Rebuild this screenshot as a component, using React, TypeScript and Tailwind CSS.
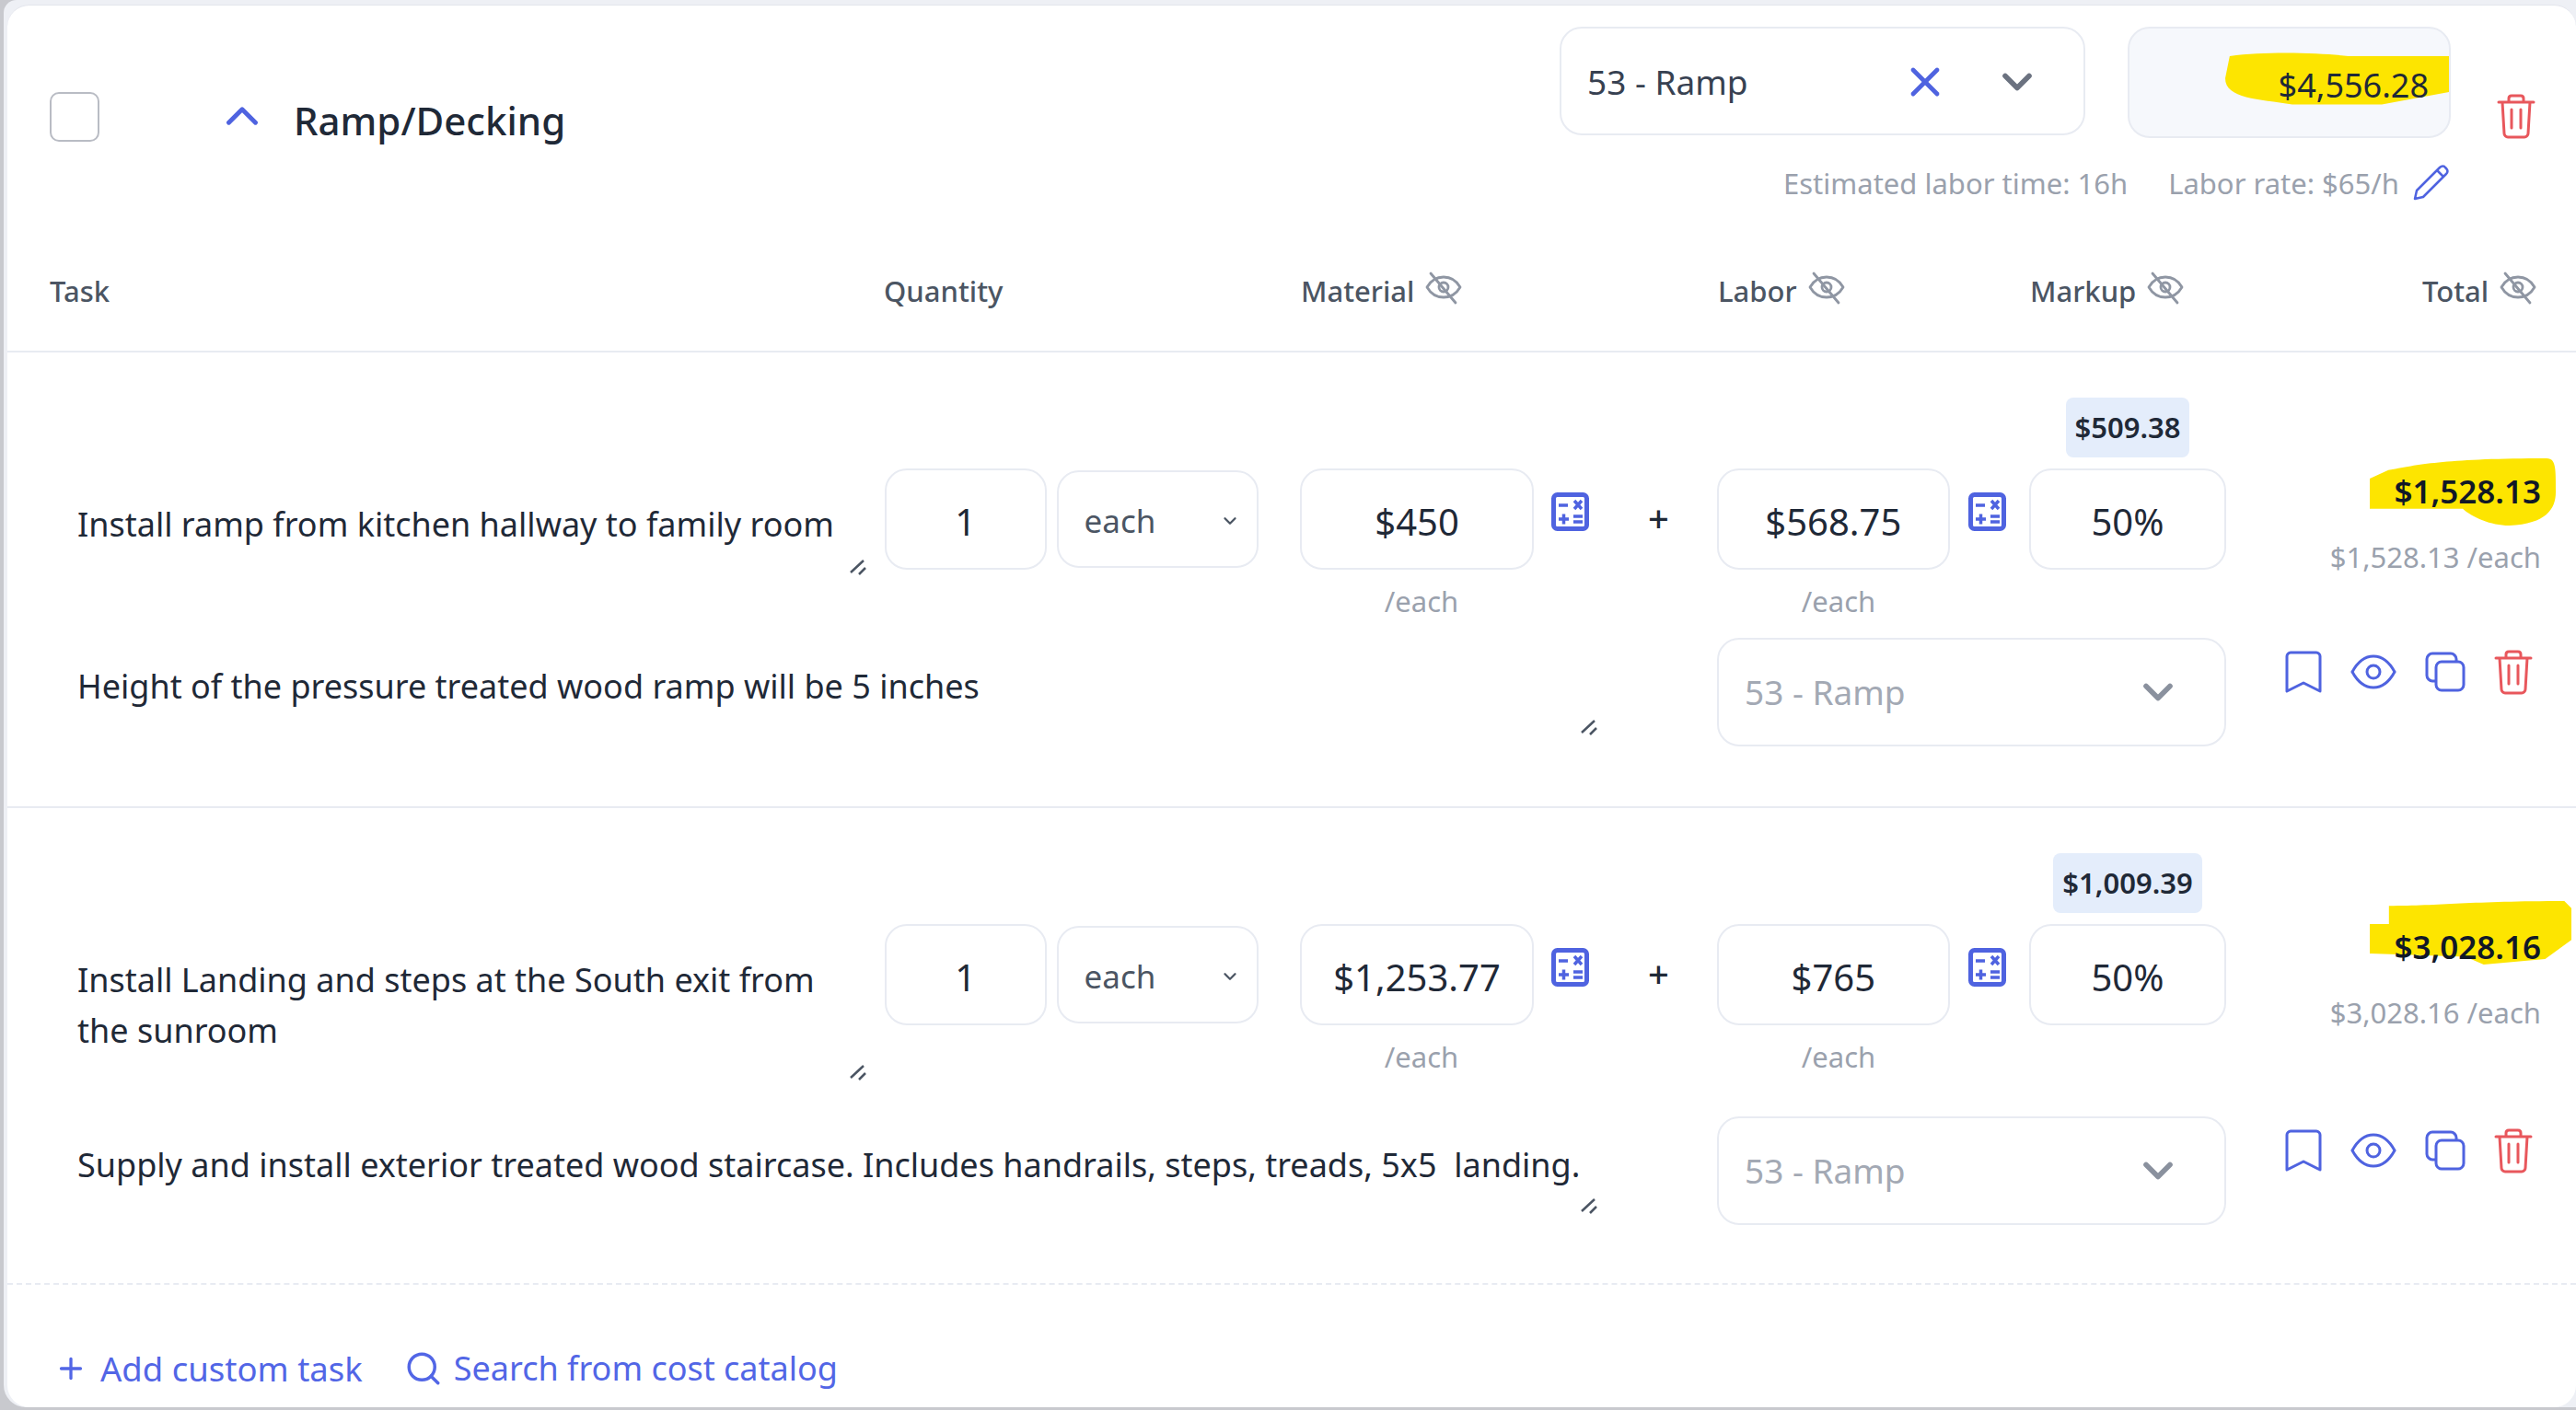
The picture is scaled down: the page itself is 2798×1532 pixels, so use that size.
import { Plus, Search, X, ChevronUp, ChevronDown } from "lucide-react";

const font = "font-['Noto_Sans','Open_Sans',sans-serif]";

const Calc = () => (
  <svg width="41" height="42" viewBox="0 0 41 42" fill="none" className="text-[#4f63e0]">
    <rect x="2.500" y="2.500" width="36" height="37" rx="4" stroke="currentColor" strokeWidth="5" />
    <path d="M8 14h10M25 9l8 9M33 9l-8 9M8 29h11M13.500 23.500v11M24 26h10M24 32h10" stroke="currentColor" strokeWidth="3.500" />
  </svg>
);

const EyeSlash = () => (
  <svg width="40" height="36" viewBox="0 0 40 36" fill="none" stroke="#8f96a3" strokeWidth="2.800" strokeLinecap="round" strokeLinejoin="round">
    <path d="M2 17c4-7 10-11 18-11s14 4 18 11c-4 7-10 11-18 11S6 24 2 17Z" />
    <circle cx="20" cy="17" r="5" />
    <path d="M6 2l27 32" />
  </svg>
);

const Pencil = () => (
  <svg width="40" height="40" viewBox="0 0 40 40" fill="none" stroke="#4f63e0" strokeWidth="2.500" strokeLinejoin="round">
    <path d="M3 37l2-9L30 3c2-2 5-2 6 0l1 1c2 2 2 4 0 6L12 35l-9 2Z" />
    <path d="M27 6l7 7" />
  </svg>
);

const Trash = () => (
  <svg width="42" height="50" viewBox="0 0 42 50" fill="none" stroke="#e8575c" strokeWidth="3" strokeLinecap="round" strokeLinejoin="round">
    <path d="M2 10h38M13 10V6c0-2 1-3 3-3h10c2 0 3 1 3 3v4M6 10l2 34c0 2 2 4 4 4h18c2 0 4-2 4-4l2-34M16 18v20M26 18v20" />
  </svg>
);

const Bookmark = () => (
  <svg width="40" height="46" viewBox="0 0 40 46" fill="none" stroke="#4f63e0" strokeWidth="3" strokeLinejoin="round">
    <path d="M2 44V6c0-2 2-4 4-4h28c2 0 4 2 4 4v38L20 35 2 44Z" />
  </svg>
);

const Eye = () => (
  <svg width="50" height="38" viewBox="0 0 50 38" fill="none" stroke="#4f63e0" strokeWidth="3">
    <path d="M2 19C8 8 15 2 25 2s17 6 23 17c-6 11-13 17-23 17S8 30 2 19Z" />
    <circle cx="25" cy="19" r="7" />
  </svg>
);

const Copy = () => (
  <svg width="44" height="44" viewBox="0 0 44 44" fill="none" stroke="#4f63e0" strokeWidth="3">
    <path d="M12 32H8c-3 0-6-3-6-6V8c0-3 3-6 6-6h20c3 0 6 3 6 6v3" />
    <rect x="12" y="11" width="30" height="31" rx="6" />
  </svg>
);

const Grip = () => (
  <svg width="20" height="20" viewBox="0 0 20 20" fill="none" stroke="#4b5563" strokeWidth="2.500">
    <path d="M2 16L16 3M11 18l7-7" />
  </svg>
);

// yellow marker strokes sit behind the totals
const Marker = ({ d, className }: { d: string; className: string }) => (
  <svg className={`absolute ${className}`} viewBox="0 0 200 80" preserveAspectRatio="none">
    <path d={d} fill="#fde500" />
  </svg>
);

const Box = ({ w, children }: { w: string; children: React.ReactNode }) => (
  <div className={`${w} h-[110px] pt-[5px] flex items-center justify-center rounded-[24px] border-2 border-[#e8ebf2] text-[40px] text-[#1f2937] bg-white`}>
    {children}
  </div>
);

const Row = ({
  h, title, note, material, labor, markup, total, noteTop, gripTop, border, markerClass, markerPath,
}: {
  h: string; title: React.ReactNode; note: string; material: string; labor: string; markup: string; total: string;
  noteTop: string; gripTop: string; border: string; markerClass: string; markerPath: string;
}) => (
  <div className={`${h} pl-[46px] pr-[38px] pt-[49px] flex flex-col border-b-2 ${border}`}>
    <div className="flex">
      <div className="w-[907px] shrink-0 pt-[110px] pl-[30px] pr-[40px] text-[#1f2937] text-[36px] leading-[55px] relative whitespace-nowrap">
        <div>{title}</div>
        <div className={`absolute left-[868px] ${gripTop}`}><Grip /></div>
      </div>
      <div className="flex flex-col w-[1457px] shrink-0">
        <div className="h-[65px] mb-[12px] flex justify-end">
          <div className="w-[214px] flex justify-center">
            <div className="h-[65px] px-[10px] flex items-center rounded-[8px] bg-[#e4edfb] text-[31px] font-semibold text-[#1f2937]">{markup}</div>
          </div>
        </div>
        <div className="flex items-start">
          <Box w="w-[176px]">1</Box>
          <div className="ml-[11px] w-[220px] h-[106px] mt-[2px] pt-[4px] flex items-center justify-between pl-[28px] pr-[18px] rounded-[24px] border-2 border-[#e8ebf2] text-[35px] text-[#4b5563]">
            each <ChevronDown size={22} strokeWidth={2.500} className="text-[#4b5563]" />
          </div>
          <div className="ml-[45px] flex flex-col items-center">
            <Box w="w-[254px]">{material}</Box>
          </div>
          <div className="ml-[19px] mt-[26px]"><Calc /></div>
          <div className="w-[139px] mt-[30px] pl-[12px] text-center text-[40px] leading-[48px] font-medium text-[#1f2937]">+</div>
          <Box w="w-[254px]">{labor}</Box>
          <div className="ml-[20px] mt-[26px]"><Calc /></div>
          <div className="ml-[25px]"><Box w="w-[214px]">50%</Box></div>
        </div>
        <div className="flex mt-[15px] text-[31px] leading-[38px] text-[#9aa1ad]">
          <div className="ml-[503px] w-[160px] text-center">/each</div>
          <div className="ml-[293px] w-[160px] text-center">/each</div>
        </div>
      </div>
      <div className="relative flex-1 flex flex-col items-end pt-[78px] z-0">
        <Marker className={`-z-10 ${markerClass}`} d={markerPath} />
        <div className="text-[35px] leading-[48px] font-semibold text-[#111827]">{total}</div>
        <div className="mt-[28px] text-[31px] leading-[38px] text-[#9aa1ad] whitespace-nowrap">{total} /each</div>
      </div>
    </div>
    <div className="flex items-start relative" style={{ marginTop: noteTop }}>
      <div className="w-[1811px] pl-[30px] pt-[25px] text-[36px] leading-[55px] text-[#1f2937] whitespace-pre">{note}</div>
      <div className="w-[553px] h-[118px] flex items-center justify-between pl-[28px] pr-[46px] rounded-[24px] border-2 border-[#e8ebf2] text-[37px] text-[#a3a9b4]">
        53 - Ramp <ChevronDown size={52} strokeWidth={2.600} className="text-[#8a919e]" />
      </div>
      <div className="ml-[64px] mt-[12px] flex items-center gap-[31px]">
        <Bookmark /><Eye /><Copy /><Trash />
      </div>
      <div className="absolute left-[1662px] top-[87px]"><Grip /></div>
    </div>
  </div>
);

const HeadCell = ({ w, label, icon = true }: { w: string; label: string; icon?: boolean }) => (
  <div className={`${w} flex items-center gap-[12px]`}>
    <span>{label}</span>
    {icon && <span className="-mt-[6px]"><EyeSlash /></span>}
  </div>
);

export default function App() {
  return (
    <div className={`${font} w-[2798px] h-[1532px] bg-[#c8c9ce] pl-[4px] pb-[3px] overflow-hidden`}>
      <div className="h-full pl-[4px] pt-[5px] bg-[#eef0f5] rounded-tl-[14px] rounded-bl-[24px]">
        <div className="h-full bg-white rounded-[24px] border-t border-[#e3e5ec]">
          <div className="flex h-[173px] pl-[46px] pr-[44px]">
            <div className="flex items-start pt-[94px]">
              <div className="w-[54px] h-[54px] rounded-[10px] border-2 border-[#b9bcc4]" />
              <ChevronUp size={58} strokeWidth={2} className="ml-[126px] -mt-[3px] text-[#4f63e0]" />
              <div className="ml-[27px] mt-[4px] text-[42px] leading-[54px] font-medium text-[#1f2937]">Ramp/Decking</div>
            </div>
            <div className="ml-auto flex flex-col items-end">
              <div className="flex items-start pt-[23px]">
                <div className="w-[571px] h-[118px] pt-[2px] flex items-center pl-[28px] pr-[46px] rounded-[24px] border-2 border-[#e8ebf2] text-[37px] text-[#374151]">
                  53 - Ramp
                  <X size={52} strokeWidth={2.200} className="ml-auto text-[#4f63e0]" />
                  <ChevronDown size={52} strokeWidth={2.600} className="ml-[48px] text-[#6b7280]" />
                </div>
                <div className="relative ml-[46px] w-[351px] h-[121px] rounded-[24px] border-2 border-[#e8ebf2] bg-[#f6f8fc] flex items-center justify-end pr-[22px] pt-[6px] z-0">
                  <Marker className="left-[104px] top-[24px] w-[243px] h-[60px] -z-10" d="M4 8C40 0 90 4 110 8H200V60l-60 18H60C30 70 0 70 0 40Z" />
                  <span className="text-[36px] text-[#1f2937]">$4,556.28</span>
                </div>
                <div className="ml-[50px] mt-[72px]"><Trash /></div>
              </div>
              <div className="flex items-center mt-[28px] mr-[94px] text-[31px] leading-[40px] text-[#9aa1ad] whitespace-nowrap">
                <span>Estimated labor time: 16h</span>
                <span className="ml-[44px]">Labor rate: $65/h</span>
                <span className="ml-[14px]"><Pencil /></span>
              </div>
            </div>
          </div>
          <div className="h-[204px] pl-[46px] flex items-start pt-[115px] text-[31px] leading-[44px] font-medium text-[#4b5563] border-b-2 border-[#e8ebf2]">
            <HeadCell w="w-[906px]" label="Task" icon={false} />
            <HeadCell w="w-[453px]" label="Quantity" icon={false} />
            <HeadCell w="w-[453px]" label="Material" />
            <HeadCell w="w-[339px]" label="Labor" />
            <HeadCell w="w-[426px]" label="Markup" />
            <HeadCell w="w-auto" label="Total" />
          </div>
          <Row h="h-[495px]" border="border-[#e8ebf2]" title="Install ramp from kitchen hallway to family room" note="Height of the pressure treated wood ramp will be 5 inches"
            material="$450" labor="$568.75" markup="$509.38" total="$1,528.13" noteTop="21px" gripTop="top-[174px]"
            markerClass="left-[156px] top-[66px] w-[202px] h-[73px]"
            markerPath="M20 14C50 8 80 0 190 0c10 0 10 10 10 40 0 20-10 38-50 40-20 0-40-10-50-20H0V24Z" />
          <Row h="h-[518px]" border="border-dashed border-[#e8ebf2]" title={<>Install Landing and steps at the South exit from<br />the sunroom</>} note="Supply and install exterior treated wood staircase. Includes handrails, steps, treads, 5x5  landing."
            material="$1,253.77" labor="$765" markup="$1,009.39" total="$3,028.16" noteTop="46px" gripTop="top-[228px]"
            markerClass="left-[156px] top-[52px] w-[219px] h-[69px]"
            markerPath="M19 29V6C70 6 100 0 193 0l7 9V49L174 73 113 80 95 70 0 66V29Z" />
          <div className="flex items-center gap-[45px] pl-[51px] pt-[67px] text-[36px] leading-[48px] text-[#5266e6]">
            <div className="flex items-center gap-[14px] text-[36.500px]"><Plus size={36} strokeWidth={2.200} />Add custom task</div>
            <div className="flex items-center gap-[12px]"><Search size={42} strokeWidth={2} />Search from cost catalog</div>
          </div>
        </div>
      </div>
    </div>
  );
}
